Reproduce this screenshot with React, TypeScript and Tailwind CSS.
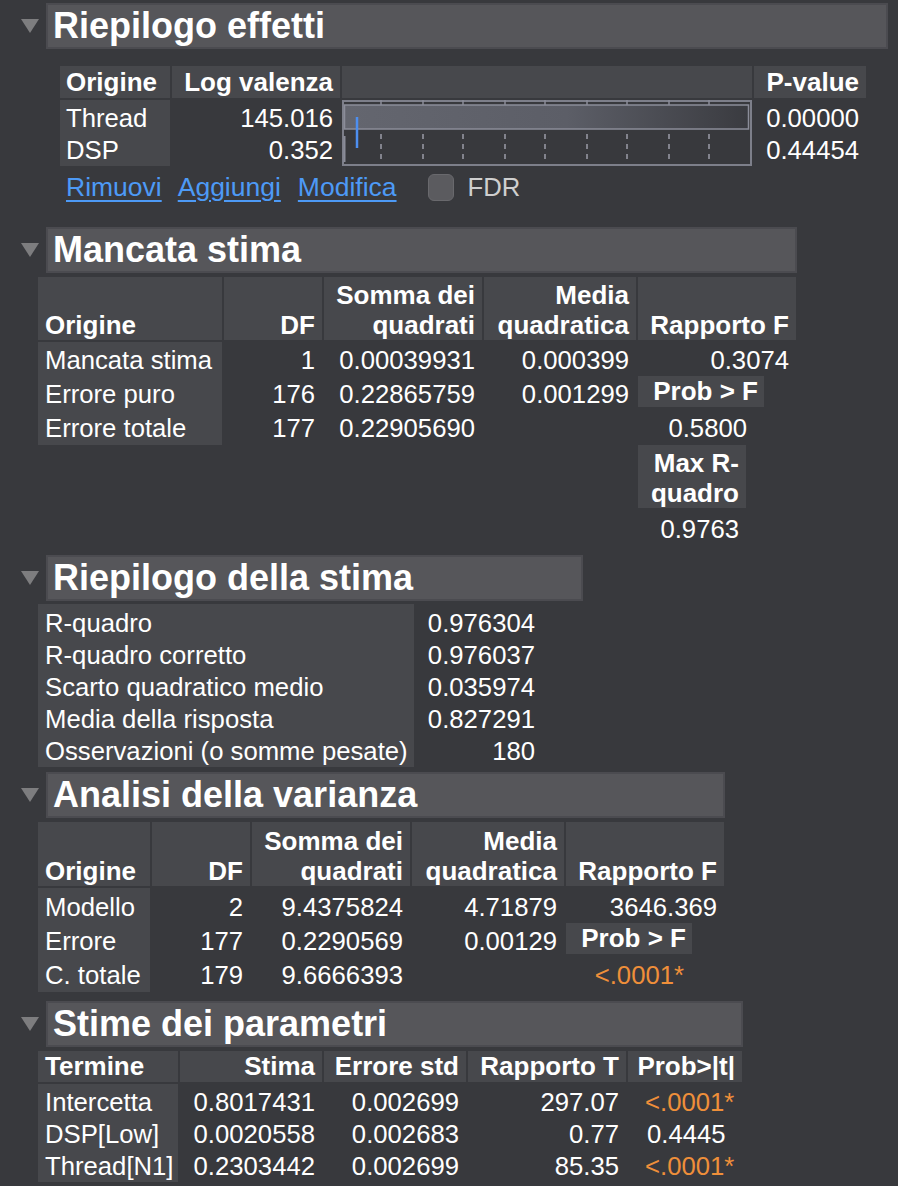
import React from 'react';

const HEAD = 'bg-[#47484c]';
const HB = 'font-bold text-[26px]';

function Triangle() {
  return (
    <svg width="18" height="14" viewBox="0 0 18 14" className="shrink-0">
      <polygon points="0,0 18,0 9,14" fill="#7d7d7f" />
    </svg>
  );
}

function SectionTitle({ title, width }: { title: string; width: string }) {
  return (
    <div className="flex items-center pl-[21px]">
      <Triangle />
      <div
        className={`ml-[7px] h-[46px] ${width} border-2 border-[#4b4b50] bg-[#56565a] pl-[5px] text-[36px] font-bold leading-[42px] text-white`}
      >
        {title}
      </div>
    </div>
  );
}

// grafico a barre della log valenza
function LogWorthChart() {
  const dashes = [39, 81, 121, 163, 203, 245, 285, 327, 367];
  return (
    <svg width="410" height="66" viewBox="0 0 410 66">
      <defs>
        <linearGradient id="barFill" x1="0" y1="0" x2="1" y2="0">
          <stop offset="0" stopColor="#64666f" />
          <stop offset="0.55" stopColor="#5c5e67" />
          <stop offset="1" stopColor="#3a3b40" />
        </linearGradient>
      </defs>
      <rect x="1" y="1" width="408" height="64" fill="none" stroke="#7d7f8a" strokeWidth="2" />
      {dashes.map((x) => (
        <line key={'t' + x} x1={x} y1="0" x2={x} y2="5" stroke="#8b8d99" strokeWidth="1.5" />
      ))}
      <rect x="2.5" y="5" width="404" height="24" fill="url(#barFill)" stroke="#8b8d99" strokeWidth="1.5" />
      {dashes.map((x) => (
        <line
          key={'d' + x}
          x1={x}
          y1="34"
          x2={x}
          y2="64"
          stroke="#9a9ca8"
          strokeWidth="1.5"
          strokeDasharray="5 5"
        />
      ))}
      <line x1="2.5" y1="36" x2="2.5" y2="62" stroke="#8a8c98" strokeWidth="2" />
      <line x1="15" y1="17" x2="15" y2="48" stroke="#4d8ff0" strokeWidth="2.5" />
    </svg>
  );
}

function RiepilogoEffetti() {
  return (
    <div>
      <SectionTitle title="Riepilogo effetti" width="w-[842px]" />
      <div className="mt-[17px] ml-[60px] flex gap-[2px]">
        <div className="w-[110px]">
          <div className={`h-[32px] ${HEAD} pl-[6px] ${HB} leading-[32px]`}>Origine</div>
          <div className={`mt-[2px] ${HEAD} pt-[2px] pl-[6px]`}>
            <div className="h-[32px] leading-[32px]">Thread</div>
            <div className="h-[32px] leading-[32px]">DSP</div>
          </div>
        </div>
        <div className="w-[168px]">
          <div className={`h-[32px] ${HEAD} pr-[7px] text-right ${HB} leading-[32px]`}>Log valenza</div>
          <div className="mt-[2px] pt-[2px] pr-[7px] text-right">
            <div className="h-[32px] leading-[32px]">145.016</div>
            <div className="h-[32px] leading-[32px]">0.352</div>
          </div>
        </div>
        <div className="w-[410px]">
          <div className={`h-[32px] ${HEAD}`} />
          <div className="mt-[2px] flex">
            <LogWorthChart />
          </div>
        </div>
        <div className="w-[112px]">
          <div className={`h-[32px] ${HEAD} pr-[7px] text-right ${HB} leading-[32px]`}>P-value</div>
          <div className="mt-[2px] pt-[2px] pr-[7px] text-right">
            <div className="h-[32px] leading-[32px]">0.00000</div>
            <div className="h-[32px] leading-[32px]">0.44454</div>
          </div>
        </div>
      </div>
      <div className="mt-[8px] ml-[66px] flex h-[27px] items-center text-[26.5px]">
        <span className="text-[#4d9af6] underline decoration-[1.5px] underline-offset-[4px]">Rimuovi</span>
        <span className="ml-[16px] text-[#4d9af6] underline decoration-[1.5px] underline-offset-[4px]">Aggiungi</span>
        <span className="ml-[17px] text-[#4d9af6] underline decoration-[1.5px] underline-offset-[4px]">Modifica</span>
        <span className="ml-[31px] h-[27px] w-[26px] rounded-[6px] border border-[#69696d] bg-[#5b5b5f]" />
        <span className="ml-[14px] text-[25.7px] text-[#cfcfcf]">FDR</span>
      </div>
    </div>
  );
}

function MancataStima() {
  const rows = [
    ['Mancata stima', '1', '0.00039931', '0.000399'],
    ['Errore puro', '176', '0.22865759', '0.001299'],
    ['Errore totale', '177', '0.22905690', ''],
  ];
  return (
    <div className="mt-[26px]">
      <SectionTitle title="Mancata stima" width="w-[751px]" />
      <div className="mt-[4px] ml-[38px] flex items-start gap-[2px]">
        <div className="w-[184px]">
          <div className={`flex h-[63px] flex-col justify-end ${HEAD} pl-[7px] ${HB} leading-[30px]`}>Origine</div>
          <div className={`mt-[2px] ${HEAD} pt-[1px] pl-[7px]`}>
            {rows.map((r) => (
              <div key={r[0]} className="h-[34px] leading-[34px]">{r[0]}</div>
            ))}
          </div>
        </div>
        <div className="w-[98px]">
          <div className={`flex h-[63px] flex-col justify-end ${HEAD} pr-[7px] text-right ${HB} leading-[30px]`}>DF</div>
          <div className="mt-[2px] pt-[1px] pr-[7px] text-right">
            {rows.map((r) => (
              <div key={r[0]} className="h-[34px] leading-[34px]">{r[1]}</div>
            ))}
          </div>
        </div>
        <div className="w-[158px]">
          <div className={`flex h-[63px] flex-col justify-end ${HEAD} pr-[7px] text-right ${HB} leading-[30px]`}>
            <span>Somma dei</span>
            <span>quadrati</span>
          </div>
          <div className="mt-[2px] pt-[1px] pr-[7px] text-right">
            {rows.map((r) => (
              <div key={r[0]} className="h-[34px] leading-[34px]">{r[2]}</div>
            ))}
          </div>
        </div>
        <div className="w-[152px]">
          <div className={`flex h-[63px] flex-col justify-end ${HEAD} pr-[7px] text-right ${HB} leading-[30px]`}>
            <span>Media</span>
            <span>quadratica</span>
          </div>
          <div className="mt-[2px] pt-[1px] pr-[7px] text-right">
            {rows.map((r) => (
              <div key={r[0]} className="h-[34px] leading-[34px]">{r[3]}</div>
            ))}
          </div>
        </div>
        <div className="w-[158px]">
          <div className={`flex h-[63px] flex-col justify-end ${HEAD} pr-[7px] text-right ${HB} leading-[30px]`}>Rapporto F</div>
          <div className="mt-[2px] pt-[1px]">
            <div className="h-[33px] pr-[7px] text-right leading-[34px]">0.3074</div>
            <div className={`h-[31px] w-[126px] ${HEAD} pr-[6px] text-right ${HB} leading-[31px]`}>Prob &gt; F</div>
            <div className="mt-[4px] h-[34px] w-[126px] pr-[17px] text-right leading-[34px]">0.5800</div>
            <div className={`flex h-[63px] w-[108px] flex-col justify-end ${HEAD} pr-[7px] text-right ${HB} leading-[30px]`}>
              <span>Max R-</span>
              <span>quadro</span>
            </div>
            <div className="mt-[4px] h-[34px] w-[108px] pr-[7px] text-right leading-[34px]">0.9763</div>
          </div>
        </div>
      </div>
    </div>
  );
}

function RiepilogoStima() {
  const rows = [
    ['R-quadro', '0.976304'],
    ['R-quadro corretto', '0.976037'],
    ['Scarto quadratico medio', '0.035974'],
    ['Media della risposta', '0.827291'],
    ['Osservazioni (o somme pesate)', '180'],
  ];
  return (
    <div className="mt-[9px]">
      <SectionTitle title="Riepilogo della stima" width="w-[537px]" />
      <div className="mt-[3px] ml-[38px] flex gap-[2px]">
        <div className={`w-[376px] ${HEAD} pt-[3px] pl-[7px]`}>
          {rows.map((r) => (
            <div key={r[0]} className="h-[32px] whitespace-nowrap leading-[32px]">{r[0]}</div>
          ))}
        </div>
        <div className="w-[126px] pt-[3px] pr-[7px] text-right">
          {rows.map((r) => (
            <div key={r[0]} className="h-[32px] leading-[32px]">{r[1]}</div>
          ))}
        </div>
      </div>
    </div>
  );
}

function AnalisiVarianza() {
  const rows = [
    ['Modello', '2', '9.4375824', '4.71879'],
    ['Errore', '177', '0.2290569', '0.00129'],
    ['C. totale', '179', '9.6666393', ''],
  ];
  return (
    <div className="mt-[5px]">
      <SectionTitle title="Analisi della varianza" width="w-[679px]" />
      <div className="mt-[4px] ml-[38px] flex items-start gap-[2px]">
        <div className="w-[112px]">
          <div className={`flex h-[64px] flex-col justify-end ${HEAD} pl-[7px] ${HB} leading-[30px]`}>Origine</div>
          <div className={`mt-[2px] ${HEAD} pt-[2px] pl-[7px]`}>
            {rows.map((r) => (
              <div key={r[0]} className="h-[34px] leading-[34px]">{r[0]}</div>
            ))}
          </div>
        </div>
        <div className="w-[98px]">
          <div className={`flex h-[64px] flex-col justify-end ${HEAD} pr-[7px] text-right ${HB} leading-[30px]`}>DF</div>
          <div className="mt-[2px] pt-[2px] pr-[7px] text-right">
            {rows.map((r) => (
              <div key={r[0]} className="h-[34px] leading-[34px]">{r[1]}</div>
            ))}
          </div>
        </div>
        <div className="w-[158px]">
          <div className={`flex h-[64px] flex-col justify-end ${HEAD} pr-[7px] text-right ${HB} leading-[30px]`}>
            <span>Somma dei</span>
            <span>quadrati</span>
          </div>
          <div className="mt-[2px] pt-[2px] pr-[7px] text-right">
            {rows.map((r) => (
              <div key={r[0]} className="h-[34px] leading-[34px]">{r[2]}</div>
            ))}
          </div>
        </div>
        <div className="w-[152px]">
          <div className={`flex h-[64px] flex-col justify-end ${HEAD} pr-[7px] text-right ${HB} leading-[30px]`}>
            <span>Media</span>
            <span>quadratica</span>
          </div>
          <div className="mt-[2px] pt-[2px] pr-[7px] text-right">
            {rows.map((r) => (
              <div key={r[0]} className="h-[34px] leading-[34px]">{r[3]}</div>
            ))}
          </div>
        </div>
        <div className="w-[158px]">
          <div className={`flex h-[64px] flex-col justify-end ${HEAD} pr-[7px] text-right ${HB} leading-[30px]`}>Rapporto F</div>
          <div className="mt-[2px] pt-[2px]">
            <div className="h-[33px] pr-[7px] text-right leading-[34px]">3646.369</div>
            <div className={`h-[31px] w-[126px] ${HEAD} pr-[6px] text-right ${HB} leading-[31px]`}>Prob &gt; F</div>
            <div className="mt-[4px] h-[34px] w-[126px] pr-[8px] text-right leading-[34px] text-[#ef8f3a]">&lt;.0001*</div>
          </div>
        </div>
      </div>
    </div>
  );
}

function StimeParametri() {
  const rows = [
    { term: 'Intercetta', est: '0.8017431', se: '0.002699', t: '297.07', p: '<.0001*', sig: true },
    { term: 'DSP[Low]', est: '0.0020558', se: '0.002683', t: '0.77', p: '0.4445', sig: false },
    { term: 'Thread[N1]', est: '0.2303442', se: '0.002699', t: '85.35', p: '<.0001*', sig: true },
  ];
  return (
    <div className="mt-[9px]">
      <SectionTitle title="Stime dei parametri" width="w-[697px]" />
      <div className="mt-[4px] ml-[38px] flex items-start gap-[2px]">
        <div className="w-[140px]">
          <div className={`h-[31px] ${HEAD} pl-[7px] ${HB} leading-[31px]`}>Termine</div>
          <div className={`mt-[2px] ${HEAD} pt-[2px] pl-[7px]`}>
            {rows.map((r) => (
              <div key={r.term} className="h-[32px] whitespace-nowrap leading-[32px]">{r.term}</div>
            ))}
          </div>
        </div>
        <div className="w-[142px]">
          <div className={`h-[31px] ${HEAD} pr-[7px] text-right ${HB} leading-[31px]`}>Stima</div>
          <div className="mt-[2px] pt-[2px] pr-[7px] text-right">
            {rows.map((r) => (
              <div key={r.term} className="h-[32px] leading-[32px]">{r.est}</div>
            ))}
          </div>
        </div>
        <div className="w-[142px]">
          <div className={`h-[31px] ${HEAD} pr-[7px] text-right ${HB} leading-[31px]`}>Errore std</div>
          <div className="mt-[2px] pt-[2px] pr-[7px] text-right">
            {rows.map((r) => (
              <div key={r.term} className="h-[32px] leading-[32px]">{r.se}</div>
            ))}
          </div>
        </div>
        <div className="w-[158px]">
          <div className={`h-[31px] ${HEAD} pr-[7px] text-right ${HB} leading-[31px]`}>Rapporto T</div>
          <div className="mt-[2px] pt-[2px] pr-[7px] text-right">
            {rows.map((r) => (
              <div key={r.term} className="h-[32px] leading-[32px]">{r.t}</div>
            ))}
          </div>
        </div>
        <div className="w-[114px]">
          <div className={`h-[31px] ${HEAD} pr-[7px] text-right ${HB} leading-[31px]`}>Prob&gt;|t|</div>
          <div className="mt-[2px] pt-[2px]">
            {rows.map((r) => (
              <div
                key={r.term}
                className={r.sig ? 'h-[32px] pl-[17px] leading-[32px] text-[#ef8f3a]' : 'h-[32px] pl-[19px] leading-[32px]'}
              >
                {r.p}
              </div>
            ))}
          </div>
        </div>
      </div>
    </div>
  );
}

export default function App() {
  return (
    <div className="min-h-[1186px] w-[898px] bg-[#38393d] pt-[3px] font-['Liberation_Sans',Arial,sans-serif] text-[25.7px] text-white">
      <RiepilogoEffetti />
      <MancataStima />
      <RiepilogoStima />
      <AnalisiVarianza />
      <StimeParametri />
    </div>
  );
}
